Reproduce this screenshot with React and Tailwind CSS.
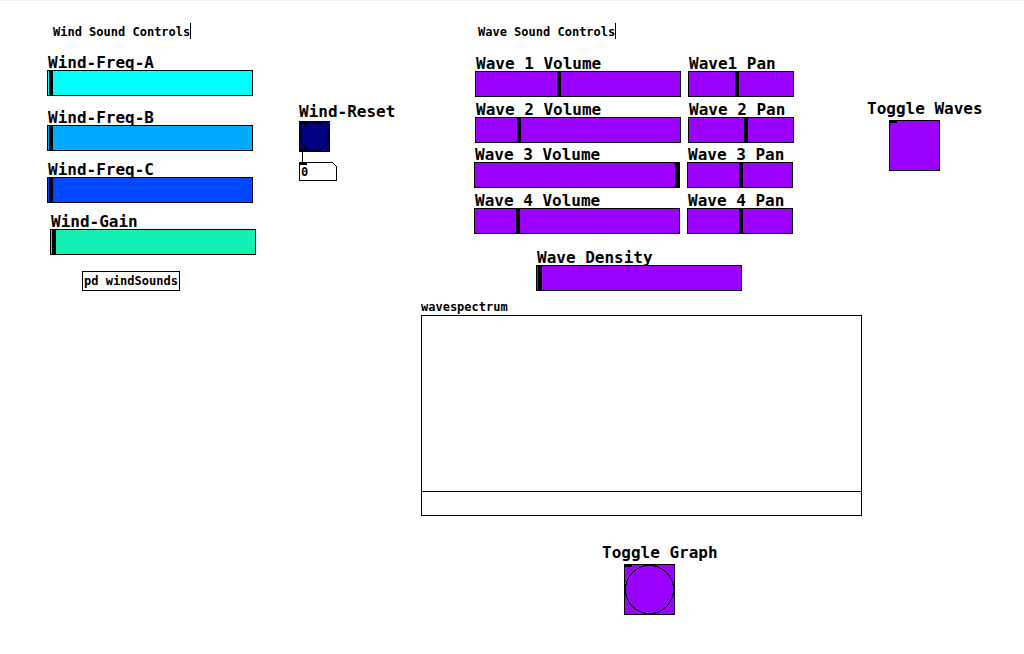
import React, { useId } from "react";

const trackClass =
  "block h-[26px] appearance-none rounded-none border border-black pl-px outline-none " +
  "[&::-webkit-slider-runnable-track]:h-6 " +
  "[&::-webkit-slider-thumb]:h-6 [&::-webkit-slider-thumb]:w-1 [&::-webkit-slider-thumb]:appearance-none " +
  "[&::-webkit-slider-thumb]:rounded-none [&::-webkit-slider-thumb]:bg-black";

const labelClass = "-mb-0.5 block whitespace-nowrap text-base leading-[18px]";

function Slider({ label, value = 0, max = 199, size = "w-[206px]", color = "bg-[#9b00ff]" }) {
  const id = useId();
  return (
    <div className={size}>
      <label htmlFor={id} className={`pl-px ${labelClass}`}>
        {label}
      </label>
      <input
        id={id}
        type="range"
        min={0}
        max={max}
        defaultValue={value}
        className={`relative w-full ${color} ${trackClass}`}
      />
    </div>
  );
}

function Comment({ children }) {
  return (
    <p className="w-fit whitespace-nowrap border-r border-black pt-0.5 text-xs leading-[14px]">
      {children}
    </p>
  );
}

function WaveRow({ n, panLabel, volume, pan }) {
  return (
    <div className="flex gap-[7px]">
      <Slider label={`Wave ${n} Volume`} value={volume} />
      <Slider label={panLabel} value={pan} max={99} size="w-[106px]" />
    </div>
  );
}

function WindReset() {
  return (
    <section className="pt-20">
      <span id="reset-label" className={labelClass}>
        Wind-Reset
      </span>
      <button type="button" aria-labelledby="reset-label" className="relative mt-0.5 block">
        <svg width="31" height="31" viewBox="0 0 31 31" shapeRendering="crispEdges" className="block">
          <rect x="0.5" y="0.5" width="30" height="30" fill="#000080" stroke="#000" />
          <circle cx="15.5" cy="15.5" r="14" fill="none" stroke="#000" />
          <path d="M0 0h8v3H0zM0 28h8v3H0z" />
        </svg>
      </button>
      <div className="ml-[3px] h-2.5 w-px bg-black" />
      <div className="relative h-[19px] w-[38px]">
        <svg width="38" height="19" viewBox="0 0 38 19" shapeRendering="crispEdges" className="absolute inset-0">
          <path d="M0.5 0.5H33.5L37.5 4.5V18.5H0.5Z" fill="#fff" stroke="#000" />
          <path d="M0 0h8v3H0z" />
        </svg>
        <input
          type="text"
          inputMode="numeric"
          aria-label="Wind value"
          defaultValue="0"
          className="relative block h-full w-full bg-transparent pl-0.5 text-xs outline-none"
        />
      </div>
    </section>
  );
}

export default function App() {
  return (
    <main className="grid grid-cols-[252fr_122fr_446fr_157fr] border-t border-[#eeeeee] bg-white pt-[22px] pl-[47px] font-['DejaVu_Sans_Mono',monospace] font-bold text-black">
      <section>
        <div className="pl-1.5">
          <Comment>Wind Sound Controls</Comment>
        </div>
        <div className="mt-[15px] flex flex-col gap-2.5">
          <div className="mb-[3px]">
            <Slider label="Wind-Freq-A" color="bg-[#00ffff]" />
          </div>
          <Slider label="Wind-Freq-B" color="bg-[#00aaff]" />
          <Slider label="Wind-Freq-C" color="bg-[#0048ff]" />
          <div className="pl-[3px]">
            <Slider label="Wind-Gain" color="bg-[#14f0b4]" />
          </div>
        </div>
        <button
          type="button"
          className="mt-4 ml-[35px] block h-5 whitespace-nowrap border border-black px-px text-xs leading-4"
        >
          pd windSounds
        </button>
      </section>

      <WindReset />

      <section className="pr-[5px]">
        <div className="pl-[57px]">
          <Comment>Wave Sound Controls</Comment>
        </div>
        <div className="mt-4 flex flex-col gap-[3px] pl-[53px]">
          <div className="flex flex-col gap-1 pl-px">
            <WaveRow n={1} panLabel="Wave1 Pan" volume={80} pan={45} />
            <WaveRow n={2} panLabel="Wave 2 Pan" volume={40} pan={54} />
          </div>
          <div className="flex flex-col gap-1">
            <WaveRow n={3} panLabel="Wave 3 Pan" volume={199} pan={50} />
            <WaveRow n={4} panLabel="Wave 4 Pan" volume={40} pan={50} />
          </div>
        </div>
        <div className="mt-[15px] pl-[115px]">
          <Slider label="Wave Density" />
        </div>
        <figure className="mt-2">
          <figcaption className="text-xs leading-4">wavespectrum</figcaption>
          <div className="h-[201px] border border-black pt-[175px]">
            <div className="h-px bg-black" />
          </div>
        </figure>
        <div className="mt-7 pl-[181px]">
          <span id="graph-label" className={labelClass}>
            Toggle Graph
          </span>
          <button type="button" aria-labelledby="graph-label" className="relative mt-1 ml-[22px] block">
            <svg width="51" height="51" viewBox="0 0 51 51" shapeRendering="crispEdges" className="block">
              <rect x="0.5" y="0.5" width="50" height="50" fill="#9b00ff" stroke="#000" />
              <circle cx="25.5" cy="25.5" r="24" fill="none" stroke="#000" />
              <path d="M0 0h8v3H0z" />
            </svg>
          </button>
        </div>
      </section>

      <section className="pt-[77px]">
        <label htmlFor="toggle-waves" className={labelClass}>
          Toggle Waves
        </label>
        <div className="relative mt-1 ml-[22px] w-fit">
          <input
            id="toggle-waves"
            type="checkbox"
            className="block size-[51px] appearance-none border border-black bg-[#9b00ff] checked:bg-black"
          />
          <span className="absolute top-0 left-0 h-[3px] w-2 bg-black" />
        </div>
      </section>
    </main>
  );
}
